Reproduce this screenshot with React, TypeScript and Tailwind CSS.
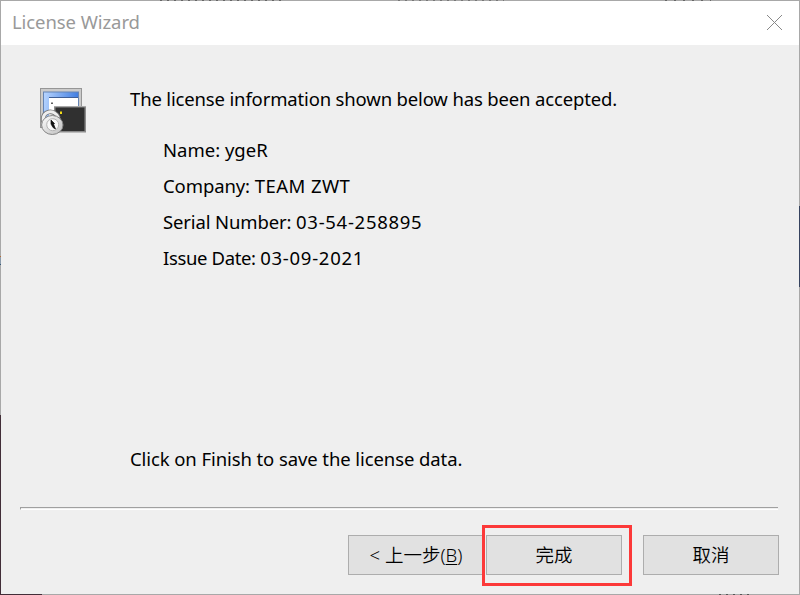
import type { ReactNode } from 'react';

function Line({ children, className = '' }: { children: ReactNode; className?: string }) {
  return <p className={`h-9 whitespace-nowrap leading-9 ${className}`}>{children}</p>;
}

function WizardButton({ children, className = '' }: { children: ReactNode; className?: string }) {
  return (
    <button
      className={`flex h-10 w-[136px] items-center justify-center border border-[#adadad] bg-[#e1e1e1] text-[18.5px] font-[350] leading-none text-black ${className}`}
    >
      {children}
    </button>
  );
}

function LicenseIcon() {
  return (
    <svg width="48" height="48" viewBox="0 0 48 48" className="block">
      <defs>
        <linearGradient id="screen" x1="0" y1="0" x2="1" y2="0.15">
          <stop offset="0" stopColor="#b9d6ff" />
          <stop offset="1" stopColor="#3f7ce0" />
        </linearGradient>
        <linearGradient id="metal" x1="0" y1="0" x2="1" y2="1">
          <stop offset="0" stopColor="#ffffff" />
          <stop offset="1" stopColor="#bcbcbc" />
        </linearGradient>
      </defs>
      <rect x="0.5" y="0.5" width="41" height="39" fill="#cbcbcb" stroke="#969696" />
      <rect x="3.5" y="4" width="35" height="33" fill="url(#screen)" stroke="#6584b4" />
      <rect x="9" y="10" width="29" height="26" fill="#ffffff" />
      <path d="M9 9.5H38" stroke="#3f5f96" />
      <rect x="11" y="14.5" width="2" height="1.5" fill="#606060" />
      <rect x="14.75" y="18.75" width="30.5" height="25" fill="#303030" stroke="#8c8c8c" strokeWidth="1.5" />
      <path d="M14 18.5H46" stroke="#a8a8a8" />
      <path d="M3.5 34C1 21.5 15.5 21 18.5 30" fill="none" stroke="#727272" strokeWidth="4.6" />
      <path d="M3.5 34C1 21.5 15.5 21 18.5 30" fill="none" stroke="#eeeeee" strokeWidth="3" />
      <rect x="20" y="23.5" width="2" height="2.5" fill="#f3dc18" />
      <ellipse cx="12.3" cy="37" rx="10.7" ry="9.5" fill="url(#metal)" stroke="#858585" />
      <circle cx="12.7" cy="36.7" r="6" fill="#f8f8f8" stroke="#b4b4b4" />
      <path d="M11 32L14.5 35.5L13.7 36.5L15.5 41L13 39.5L11 36Z" fill="#111" stroke="#111" strokeWidth="0.7" />
    </svg>
  );
}

export default function App() {
  return (
    <main className="grid h-[595px] w-[800px] grid-cols-[1px_798px_1px] grid-rows-[1px_593px_1px] overflow-hidden bg-[#a8a8a8] font-['Noto_Sans','Noto_Sans_CJK_SC',sans-serif] text-black">
      <div className="col-span-3 flex bg-[#a8a8a8]">
        <div className="ml-[160px] w-[121px] bg-[repeating-linear-gradient(90deg,#666_0_2px,#a8a8a8_2px_7px)]" />
        <div className="ml-[117px] w-[106px] bg-[repeating-linear-gradient(90deg,#777_0_2px,#a8a8a8_2px_7px)]" />
        <div className="ml-[161px] w-[46px] bg-[repeating-linear-gradient(90deg,#666_0_2px,#a8a8a8_2px_9px)]" />
      </div>
      <div className="flex flex-col">
        <div className="h-[255px] bg-[#a8a8a8]" />
        <div className="h-px bg-[#b46b35]" />
        <div className="h-[7px] bg-[#8b9bab]" />
        <div className="h-px bg-[#365875]" />
        <div className="h-[150px] bg-[#a8a8a8]" />
        <div className="flex-1 bg-[#422e38]" />
      </div>
      <div className="flex flex-col bg-[#efefef]">
        <header className="flex h-11 items-center justify-between bg-white pb-0.5 pl-[11px] pr-[17px] text-[#999999]">
          <h1 className="whitespace-nowrap text-[18.5px] leading-none tracking-[-0.08px]">License Wizard</h1>
          <svg width="15" height="15" viewBox="0 0 15 15" className="block">
            <path d="M0 0L15 15M15 0L0 15" stroke="#888" strokeWidth="1" />
          </svg>
        </header>
        <section className="flex h-[461px] pl-[39px] pt-[43px] text-[18.5px]">
          <LicenseIcon />
          <div className="pl-[42px]">
            <Line className="-mt-[7px] tracking-[-0.155px]">The license information shown below has been accepted.</Line>
            <div className="mt-[15px] pl-[33px]">
              <Line>Name: ygeR</Line>
              <Line>
                <span className="tracking-[-0.1px]">Company: </span>
                <span className="tracking-[0.45px]">TEAM ZWT</span>
              </Line>
              <Line>
                <span className="tracking-[-0.13px]">Serial Number: </span>
                <span className="tracking-[0.72px]">03-54-258895</span>
              </Line>
              <Line>
                <span className="tracking-[-0.36px]">Issue Date: </span>
                <span className="tracking-[0.75px]">03-09-2021</span>
              </Line>
            </div>
            <Line className="mt-[165px] tracking-[-0.09px]">Click on Finish to save the license data.</Line>
          </div>
        </section>
        <div className="ml-[19px] mt-px h-[3px] w-[758px] border-b border-l border-t border-b-white border-l-[#a0a0a0] border-t-[#a0a0a0]" />
        <footer className="flex items-start pl-[347px] pt-[15px]">
          <WizardButton className="mt-2.5">
            <span>&lt; 上一步(<u className="underline decoration-1 underline-offset-2">B</u>)</span>
          </WizardButton>
          <div className="-ml-0.5 h-[61px] w-[150px] border-[3px] border-[#fc3939] pl-px pt-[7px]">
            <WizardButton>完成</WizardButton>
          </div>
          <WizardButton className="ml-[11px] mt-2.5">取消</WizardButton>
        </footer>
      </div>
      <div className="flex flex-col bg-[#a8a8a8]">
        <div className="h-[205px]" />
        <div className="h-[81px] bg-[#35425e]" />
      </div>
      <div className="col-span-3 flex bg-[#a8a8a8]">
        <div className="w-[42px] bg-[#422e38]" />
        <div className="ml-[677px] w-[34px] bg-[repeating-linear-gradient(90deg,#555_0_2px,#a8a8a8_2px_7px)]" />
      </div>
    </main>
  );
}
